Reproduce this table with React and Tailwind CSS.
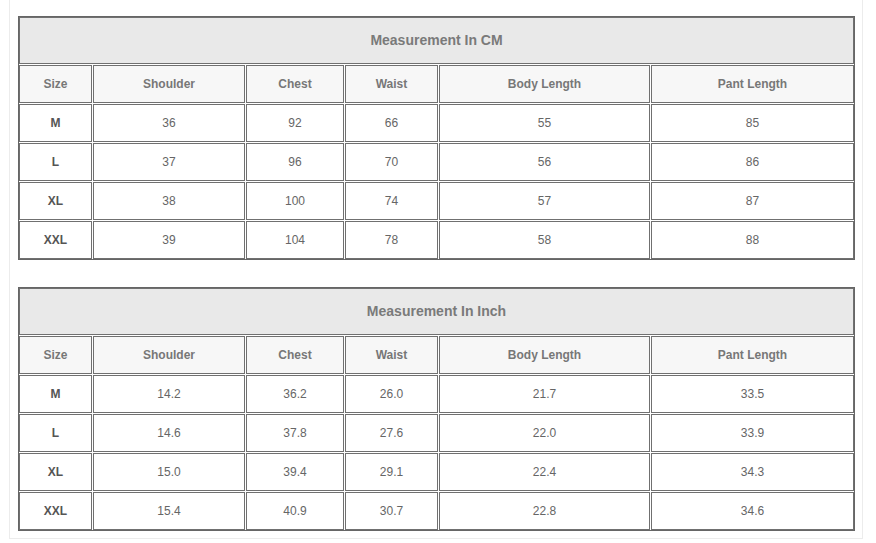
const headers = ["Size", "Shoulder", "Chest", "Waist", "Body Length", "Pant Length"];

const cm = [
  ["M", "36", "92", "66", "55", "85"],
  ["L", "37", "96", "70", "56", "86"],
  ["XL", "38", "100", "74", "57", "87"],
  ["XXL", "39", "104", "78", "58", "88"],
];

const inch = [
  ["M", "14.2", "36.2", "26.0", "21.7", "33.5"],
  ["L", "14.6", "37.8", "27.6", "22.0", "33.9"],
  ["XL", "15.0", "39.4", "29.1", "22.4", "34.3"],
  ["XXL", "15.4", "40.9", "30.7", "22.8", "34.6"],
];

function SizeTable({ title, rows }) {
  return (
    <div className="w-[837px] border border-[#666] bg-white">
      <div className="grid grid-cols-[73px_152px_98px_93px_211px_203px] gap-px">
        <div className="col-span-6 h-[47px] border border-[#707070] bg-[#e9e9e9] flex items-center justify-center text-[14px] font-bold text-[#7a7a7a]">
          {title}
        </div>
        {headers.map((h) => (
          <div
            key={h}
            className="h-[38px] border border-[#707070] bg-[#f7f7f7] flex items-center justify-center text-[12px] font-bold text-[#777]"
          >
            {h}
          </div>
        ))}
        {rows.map((r) =>
          r.map((v, i) => (
            <div
              key={r[0] + i}
              className={
                "h-[38px] border border-[#707070] bg-white flex items-center justify-center text-[12px] " +
                (i === 0 ? "font-bold text-[#555]" : "text-[#666]")
              }
            >
              {v}
            </div>
          ))
        )}
      </div>
    </div>
  );
}

export default function App() {
  return (
    <div className="w-[876px] h-[543px] bg-white font-['Liberation_Sans',Arial,sans-serif]">
      <div className="ml-[9px] w-[854px] border-x border-b border-[#ececec] pl-[8px] pt-[16px] pb-[7px] flex flex-col gap-[27px]">
        <SizeTable title="Measurement In CM" rows={cm} />
        <SizeTable title="Measurement In Inch" rows={inch} />
      </div>
    </div>
  );
}
